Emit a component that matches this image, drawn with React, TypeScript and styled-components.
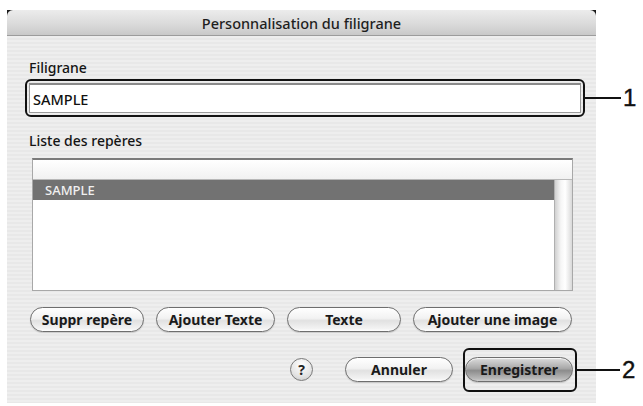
import styled, { createGlobalStyle } from "styled-components";

const Global = createGlobalStyle`
  html, body {
    margin: 0;
    padding: 0;
    background: #ffffff;
  }
  body {
    font-family: "Noto Sans", "DejaVu Sans", sans-serif;
    color: #1c1c1c;
  }
`;

const Window = styled.div`
  position: relative;
  width: 589px;
  height: 393px;
  margin: 10px 0 0 7px;
  display: flex;
  flex-direction: column;
  background: linear-gradient(#1a1a1a 0 6px, transparent 6px),
    repeating-linear-gradient(#eeeeee 0 2px, #e8e8e8 2px 4px);
`;

const TitleBar = styled.div`
  height: 25px;
  border-radius: 6px 6px 0 0;
  background: linear-gradient(#ececec, #d9d9d9 60%, #c9c9c9);
  border-bottom: 1px solid #9c9c9c;
  display: flex;
  align-items: center;
  justify-content: center;
  font-size: 14.5px;
  font-weight: 500;
  color: #1e1e1e;
`;

const Body = styled.div`
  flex: 1;
  display: flex;
  flex-direction: column;
  padding: 0 16px 0 22px;
  background: repeating-linear-gradient(#eeeeee 0 2px, #e8e8e8 2px 4px);
`;

const Label = styled.div<{ $top: number }>`
  margin-top: ${({ $top }) => $top}px;
  height: 16px;
  line-height: 16px;
  font-size: 14px;
  font-weight: 500;
  color: #141414;
`;

const Annotated = styled.div<{ $top?: number; $w?: number }>`
  position: relative;
  margin-top: ${({ $top }) => $top ?? 0}px;
  width: ${({ $w }) => ($w ? `${$w}px` : "auto")};
`;

const Callout = styled.div<{ $t: number; $r: number; $b: number; $l: number }>`
  position: absolute;
  top: ${({ $t }) => -$t}px;
  right: ${({ $r }) => -$r}px;
  bottom: ${({ $b }) => -$b}px;
  left: ${({ $l }) => -$l}px;
  border: 2.5px solid #111;
  border-radius: 6px;
  pointer-events: none;
`;

const Leader = styled.div<{ $from: number; $len: number }>`
  position: absolute;
  top: 50%;
  right: ${({ $from, $len }) => -$from - $len}px;
  width: ${({ $len }) => $len}px;
  height: 2px;
  margin-top: -1px;
  background: #111;
`;

const Tag = styled.div<{ $from: number }>`
  position: absolute;
  top: 50%;
  left: calc(100% + ${({ $from }) => $from}px);
  transform: translateY(-50%);
  font-family: "Liberation Sans", Arial, sans-serif;
  font-size: 24px;
  line-height: 1;
  color: #111;
  -webkit-text-stroke: 0.4px #111;
`;

const Field = styled.div`
  height: 30px;
  width: 552px;
  box-sizing: border-box;
  background: #ffffff;
  border: 1px solid #9a9a9a;
  border-top: 2px solid #8a8a8a;
  display: flex;
  align-items: center;
  padding-left: 3px;
  font-size: 14.5px;
  font-weight: 500;
  color: #111;
`;

const List = styled.div`
  margin: 9px 0 0 3px;
  width: 541px;
  height: 133px;
  box-sizing: border-box;
  background: #ffffff;
  border: 1px solid #a8a8a8;
  border-top: 2px solid #7a7a7a;
  display: flex;
  flex-direction: column;
`;

const ListHeader = styled.div`
  height: 19px;
  background: linear-gradient(#ffffff, #f1f1f1);
  border-bottom: 1px solid #b8b8b8;
`;

const ListBody = styled.div`
  flex: 1;
  display: flex;
`;

const Rows = styled.div`
  flex: 1;
`;

const Row = styled.div<{ $selected?: boolean }>`
  height: 20px;
  display: flex;
  align-items: center;
  padding-left: 12px;
  font-size: 13px;
  font-weight: 500;
  background: ${({ $selected }) => ($selected ? "#727272" : "transparent")};
  color: ${({ $selected }) => ($selected ? "#f0f0f0" : "#111")};
`;

const Scrollbar = styled.div`
  width: 17px;
  background: linear-gradient(to right, #d0d0d0, #f6f6f6 35%, #ffffff 60%, #d9d9d9);
  border-left: 1px solid #b0b0b0;
`;

const ButtonRow = styled.div<{ $top: number; $end?: boolean }>`
  margin: ${({ $top }) => $top}px 0 0 1px;
  width: 543px;
  display: flex;
  align-items: center;
  justify-content: ${({ $end }) => ($end ? "flex-end" : "flex-start")};
  gap: 12px;
`;

const Pill = styled.button<{ $w: number; $default?: boolean }>`
  width: ${({ $w }) => $w}px;
  height: 25px;
  padding: 0;
  border-radius: 13px;
  border: 1px solid #6e6e6e;
  font-family: "Noto Sans", "DejaVu Sans", sans-serif;
  font-size: 14px;
  font-weight: 700;
  color: #1a1a1a;
  background: ${({ $default }) =>
    $default
      ? "linear-gradient(#dcdcdc, #a9a9a9 45%, #8c8c8c 55%, #b9b9b9 90%, #cfcfcf)"
      : "linear-gradient(#ffffff, #f2f2f2 45%, #e1e1e1 55%, #f3f3f3 90%, #ffffff)"};
  box-shadow: inset 0 1px 1px rgba(255, 255, 255, 0.8), 0 1px 1px rgba(0, 0, 0, 0.15);
`;

const Help = styled.button`
  width: 23px;
  height: 23px;
  padding: 0;
  border-radius: 50%;
  border: 1.5px solid #7a7a7a;
  background: radial-gradient(circle at 50% 30%, #ffffff, #e4e4e4 60%, #c6c6c6);
  font-family: "Noto Sans", "DejaVu Sans", sans-serif;
  font-size: 14px;
  font-weight: 700;
  color: #222;
  line-height: 1;
  margin-right: 20px;
`;

export default function App() {
  return (
    <>
      <Global />
      <Window>
        <TitleBar>Personnalisation du filigrane</TitleBar>
        <Body>
          <Label $top={24}>Filigrane</Label>
          <Annotated $top={7} $w={552}>
            <Field>SAMPLE</Field>
            <Callout $t={4} $r={4} $b={4} $l={4} />
            <Leader $from={4} $len={36} />
            <Tag $from={42}>1</Tag>
          </Annotated>

          <Label $top={20}>Liste des repères</Label>
          <List>
            <ListHeader />
            <ListBody>
              <Rows>
                <Row $selected>SAMPLE</Row>
              </Rows>
              <Scrollbar />
            </ListBody>
          </List>

          <ButtonRow $top={16}>
            <Pill $w={114}>Suppr repère</Pill>
            <Pill $w={119}>Ajouter Texte</Pill>
            <Pill $w={114}>Texte</Pill>
            <Pill $w={159}>Ajouter une image</Pill>
          </ButtonRow>

          <ButtonRow $top={25} $end>
            <Help>?</Help>
            <Pill $w={108}>Annuler</Pill>
            <Annotated>
              <Pill $w={108} $default>
                Enregistrer
              </Pill>
              <Callout $t={9} $r={4} $b={10} $l={2} />
              <Leader $from={4} $len={43} />
              <Tag $from={49}>2</Tag>
            </Annotated>
          </ButtonRow>
        </Body>
      </Window>
    </>
  );
}
